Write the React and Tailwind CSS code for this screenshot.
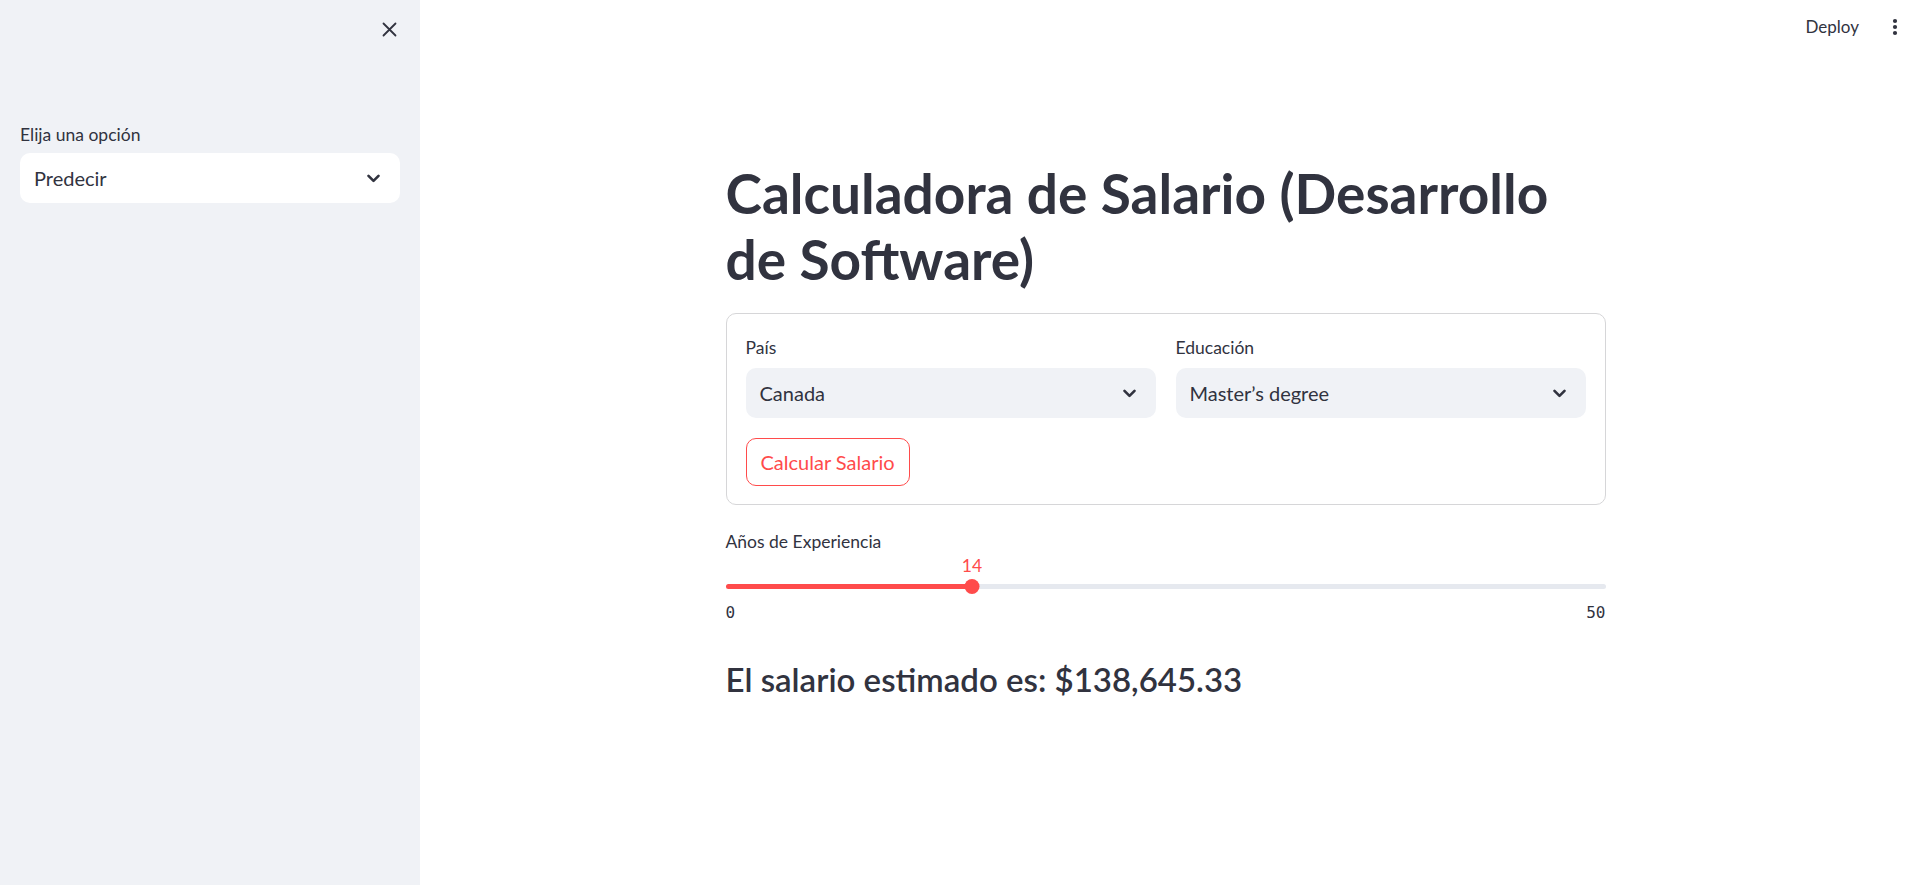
import React from "react";

const font = { fontFamily: "Lato, 'Noto Sans', sans-serif" };

function Chevron() {
  return (
    <svg width="13" height="9" viewBox="0 0 13 9" className="shrink-0">
      <path d="M1.5 1.8 L6.5 6.8 L11.5 1.8" fill="none" stroke="#31333f" strokeWidth="2.6" strokeLinecap="round" strokeLinejoin="round" />
    </svg>
  );
}

function Select({ value, bg }) {
  return (
    <div className={`flex h-[50px] items-center justify-between rounded-[10px] pl-[14px] pr-[20px] ${bg}`}>
      <span className="text-[20px] text-[#31333f]">{value}</span>
      <Chevron />
    </div>
  );
}

export default function App() {
  return (
    <div className="flex h-[885px] w-full overflow-hidden bg-white text-[#31333f]" style={font}>
      <aside className="flex w-[420px] shrink-0 flex-col bg-[#f0f2f6] px-[20px]">
        <div className="flex h-[58px] items-center justify-end pr-[3px]">
          <svg width="15" height="15" viewBox="0 0 15 15">
            <path d="M1.5 1.5 L13.5 13.5 M13.5 1.5 L1.5 13.5" stroke="#31333f" strokeWidth="1.8" strokeLinecap="round" />
          </svg>
        </div>
        <div className="mt-[63px] text-[17.5px] leading-[28px]">Elija una opción</div>
        <div className="mt-[4px]">
          <Select value="Predecir" bg="bg-white" />
        </div>
      </aside>

      <main className="relative flex-1">
        <div className="absolute right-0 top-0 flex h-[54px] items-center gap-[33px] pr-[13px]">
          <span className="text-[17px]">Deploy</span>
          <svg width="6" height="18" viewBox="0 0 6 18">
            <circle cx="3" cy="3" r="2.1" fill="#31333f" />
            <circle cx="3" cy="9" r="2.1" fill="#31333f" />
            <circle cx="3" cy="15" r="2.1" fill="#31333f" />
          </svg>
        </div>

        <div className="mx-auto w-[880px] pt-[160px]">
          <h1 className="max-w-[855px] text-[55px] font-bold leading-[66px]">
            Calculadora de Salario (Desarrollo de Software)
          </h1>

          <div className="mt-[21px] rounded-[10px] border border-[#d6d6d8] px-[19px] pb-[18px] pt-[20px]">
            <div className="grid grid-cols-2 gap-[20px]">
              <div>
                <div className="text-[17.5px] leading-[28px]">País</div>
                <div className="mt-[6px]">
                  <Select value="Canada" bg="bg-[#f0f2f6]" />
                </div>
              </div>
              <div>
                <div className="text-[17.5px] leading-[28px]">Educación</div>
                <div className="mt-[6px]">
                  <Select value="Master’s degree" bg="bg-[#f0f2f6]" />
                </div>
              </div>
            </div>
            <button className="mt-[20px] flex h-[48px] items-center rounded-[10px] border border-[#ff4b4b] bg-white px-[14px] text-[20px] text-[#ff4b4b]">
              Calcular Salario
            </button>
          </div>

          <div className="mt-[23px] text-[17.5px] leading-[28px]">Años de Experiencia</div>
          <div className="relative h-[33px]">
            <div className="absolute left-[28%] top-0 -translate-x-1/2 text-[17.5px] leading-[20px] text-[#ff4b4b]">14</div>
            <div className="absolute left-0 right-0 top-[27.5px] h-[5px] rounded-full bg-[#e6e9ef]" />
            <div className="absolute left-0 top-[27.5px] h-[5px] w-[28%] rounded-full bg-[#ff4b4b]" />
            <div className="absolute left-[28%] top-[22.5px] h-[15px] w-[15px] -translate-x-1/2 rounded-full bg-[#ff4b4b]" />
          </div>
          <div className="mt-[14px] flex justify-between text-[16px] leading-[20px] text-[#31333f]" style={{ fontFamily: "'DejaVu Sans Mono', monospace" }}>
            <span>0</span>
            <span>50</span>
          </div>

          <h3 className="mt-[35px] text-[33px] font-semibold leading-[42px]">El salario estimado es: $138,645.33</h3>
        </div>
      </main>
    </div>
  );
}
